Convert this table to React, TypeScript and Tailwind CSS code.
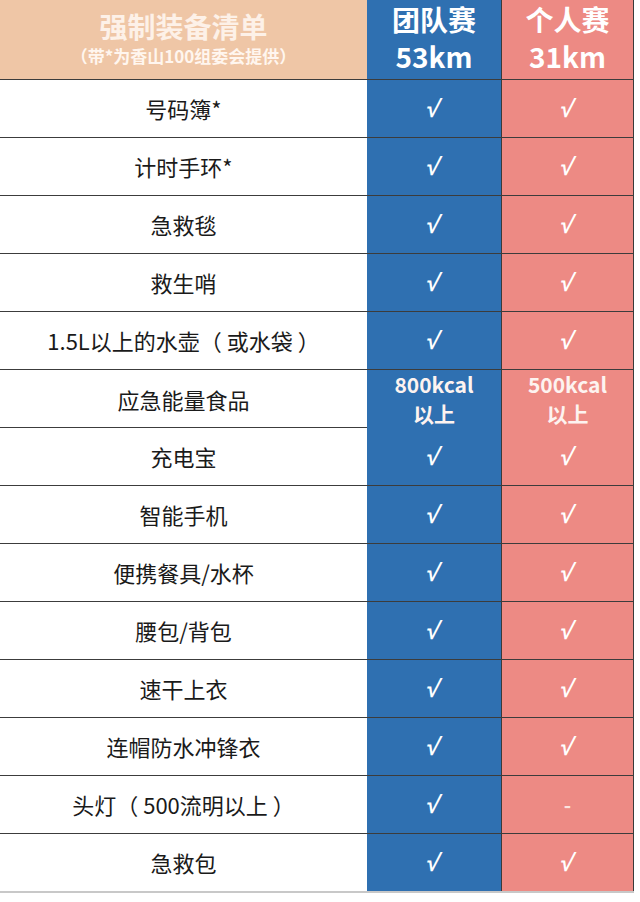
const items: { name: string; team: string; solo: string }[] = [
  { name: '号码簿*', team: '√', solo: '√' },
  { name: '计时手环*', team: '√', solo: '√' },
  { name: '急救毯', team: '√', solo: '√' },
  { name: '救生哨', team: '√', solo: '√' },
  { name: '1.5L以上的水壶（ 或水袋 ）', team: '√', solo: '√' },
  { name: '应急能量食品', team: '800kcal\n以上', solo: '500kcal\n以上' },
  { name: '充电宝', team: '√', solo: '√' },
  { name: '智能手机', team: '√', solo: '√' },
  { name: '便携餐具/水杯', team: '√', solo: '√' },
  { name: '腰包/背包', team: '√', solo: '√' },
  { name: '速干上衣', team: '√', solo: '√' },
  { name: '连帽防水冲锋衣', team: '√', solo: '√' },
  { name: '头灯（ 500流明以上 ）', team: '√', solo: '-' },
  { name: '急救包', team: '√', solo: '√' },
]

function Mark({ value }: { value: string }) {
  if (value === '√') {
    return (
      <span
        className="inline-block -skew-x-12 text-[24px] font-bold text-white"
        style={{ fontFamily: '"Liberation Sans", "DejaVu Sans", sans-serif' }}
      >
        √
      </span>
    )
  }
  if (value === '-') {
    return <span className="text-[20px] font-bold text-[#fbe3df]">-</span>
  }
  return (
    <span className="whitespace-pre-line text-center text-[21px] font-bold leading-[29px] text-[#fdf3f0]">
      {value}
    </span>
  )
}

export default function App() {
  return (
    <div
      className="h-[902px] w-[640px] bg-white"
      style={{ fontFamily: '"Noto Sans CJK SC", "Noto Sans", sans-serif' }}
    >
      <div className="w-[634px]">
        {/* header */}
        <div className="grid h-[79px] grid-cols-[367px_134px_133px]">
          <div className="flex flex-col items-center justify-center bg-[#efc6a6] pb-1">
            <div className="text-[28px] font-bold leading-[36px] text-[#fdf1e8]">强制装备清单</div>
            <div className="text-[17px] font-bold leading-[24px] text-[#fff6ef]">（带*为香山100组委会提供）</div>
          </div>
          <div className="flex flex-col items-center justify-center bg-[#2f70b1] pb-1 text-white">
            <div className="text-[28px] font-bold leading-[37px]">团队赛</div>
            <div className="text-[28px] font-bold leading-[37px]">53km</div>
          </div>
          <div className="flex flex-col items-center justify-center border-l border-r border-[#3a3a3a] bg-[#ed8a84] pb-1 text-white">
            <div className="text-[28px] font-bold leading-[37px]">个人赛</div>
            <div className="text-[28px] font-bold leading-[37px]">31km</div>
          </div>
        </div>

        {items.map((item) => (
          <div
            key={item.name}
            className="grid h-[58px] grid-cols-[367px_134px_133px] border-t-[1.5px] border-[#3c3c3c]"
          >
            <div className="flex items-center justify-center whitespace-pre text-[22px] text-[#1a1a1a]">{item.name}</div>
            <div className="flex items-center justify-center bg-[#2f70b1]">
              <Mark value={item.team} />
            </div>
            <div className="flex items-center justify-center border-l border-r border-[#3a3a3a] bg-[#ed8a84]">
              <Mark value={item.solo} />
            </div>
          </div>
        ))}
        <div className="h-[2px] bg-[#c8c8c8]" />
      </div>
    </div>
  )
}
